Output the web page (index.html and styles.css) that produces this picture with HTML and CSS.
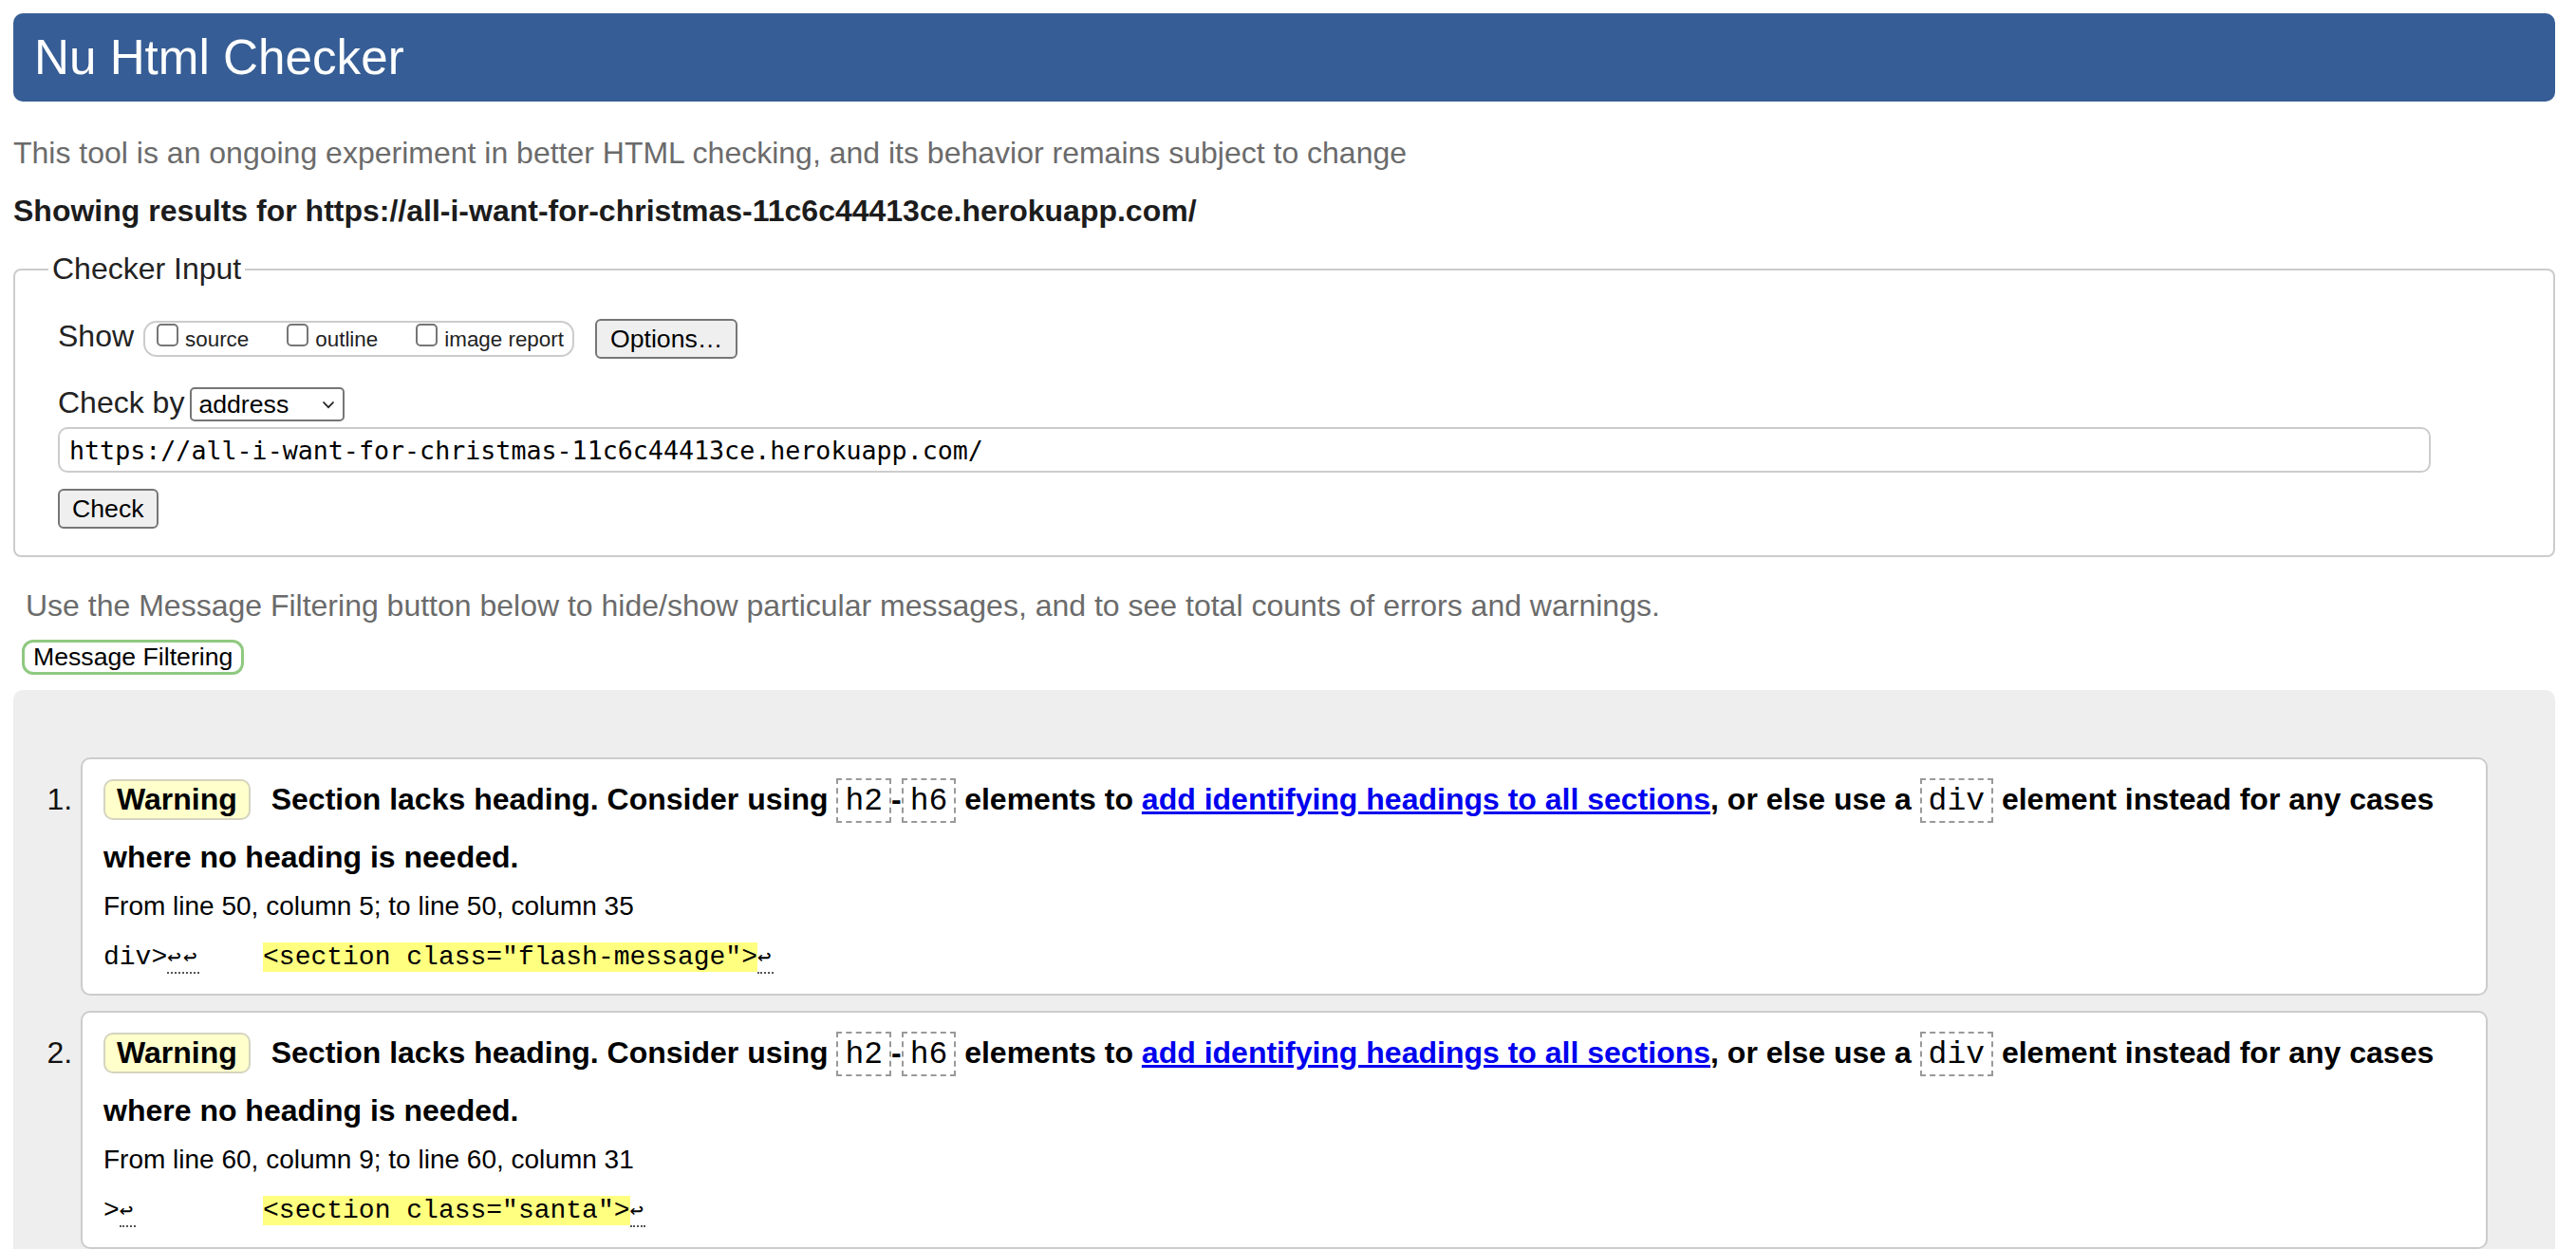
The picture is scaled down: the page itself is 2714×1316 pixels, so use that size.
FILE: index.html
```html
<!DOCTYPE html>
<html lang="en">
<head>
<meta charset="utf-8">
<title>Nu Html Checker</title>
<link rel="stylesheet" href="styles.css">
</head>
<body>
<h1 class="title">Nu Html Checker</h1>
<p class="intro">This tool is an ongoing experiment in better HTML checking, and its behavior remains subject to change</p>
<p class="showing">Showing results for https://all-i-want-for-christmas-11c6c44413ce.herokuapp.com/</p>
<form class="checker">
  <fieldset class="checker-input">
    <legend class="legend">Checker Input</legend>
    <div class="show-row">
      <span class="row-label">Show</span>
      <div class="show-group">
        <label class="opt"><input type="checkbox" class="cb"><span class="opt-text">source</span></label>
        <label class="opt"><input type="checkbox" class="cb"><span class="opt-text">outline</span></label>
        <label class="opt opt-last"><input type="checkbox" class="cb"><span class="opt-text">image report</span></label>
      </div>
      <button class="btn options" type="button">Options…</button>
    </div>
    <div class="by-row">
      <span class="row-label by-label">Check by</span>
      <div class="select">
        <span>address</span>
        <svg class="chev" width="14" height="9" viewBox="0 0 14 9"><polyline points="1.5,1.5 7,7.2 12.5,1.5" fill="none" stroke="#222" stroke-width="1.8"/></svg>
      </div>
    </div>
    <input class="url" type="text" value="https://all-i-want-for-christmas-11c6c44413ce.herokuapp.com/">
    <div class="check-row"><button class="btn check" type="button">Check</button></div>
  </fieldset>
</form>
<p class="filter-note">Use the Message Filtering button below to hide/show particular messages, and to see total counts of errors and warnings.</p>
<button class="filter-btn" type="button">Message Filtering</button>
<div class="results">
  <ol class="messages">
    <li class="msg">
      <p class="msg-text"><span class="badge">Warning</span> Section lacks heading. Consider using <code class="tag">h2</code>-<code class="tag">h6</code> elements to <a class="link" href="#">add identifying headings to all sections</a>, or else use a <code class="tag">div</code> element instead for any cases where no heading is needed.</p>
      <p class="loc">From line 50, column 5; to line 50, column 35</p>
      <p class="extract">div&gt;<span class="lf">↩↩</span>    <span class="hl">&lt;section class="flash-message"&gt;</span><span class="lf">↩</span></p>
    </li>
    <li class="msg">
      <p class="msg-text"><span class="badge">Warning</span> Section lacks heading. Consider using <code class="tag">h2</code>-<code class="tag">h6</code> elements to <a class="link" href="#">add identifying headings to all sections</a>, or else use a <code class="tag">div</code> element instead for any cases where no heading is needed.</p>
      <p class="loc">From line 60, column 9; to line 60, column 31</p>
      <p class="extract">&gt;<span class="lf">↩</span>        <span class="hl">&lt;section class="santa"&gt;</span><span class="lf">↩</span></p>
    </li>
  </ol>
</div>
</body>
</html>
```

FILE: styles.css
```css
* {
  box-sizing: border-box;
}

html {
  background: #ffffff;
}

body {
  margin: 0;
  padding: 14px 22px 0 14px;
  font-family: "Liberation Sans", Arial, Helvetica, sans-serif;
  font-size: 32px;
  color: #222222;
}

.title {
  margin: 0;
  height: 93px;
  line-height: 93px;
  padding: 0 22px;
  background: #365d95;
  color: #ffffff;
  font-weight: normal;
  font-size: 51.2px;
  border-radius: 10px;
}

.intro {
  margin: 36px 0 0;
  line-height: 37px;
  color: #6b6b6b;
}

.showing {
  margin: 24px 0 0;
  line-height: 37px;
  font-weight: bold;
  color: #1c1c1c;
}

.checker {
  margin: 0;
}

.checker-input {
  margin: 24px 0 0;
  padding: 0 20px 28px 45px;
  border: 2px solid #cccccc;
  border-radius: 8px;
  min-width: 0;
}

.legend {
  padding: 0 4px;
  margin-left: -10px;
  font-size: 32px;
  line-height: 37px;
  color: #222222;
}

.show-row {
  display: flex;
  align-items: flex-start;
  margin-top: 34px;
  height: 42px;
}

.row-label {
  line-height: 37px;
  color: #222222;
}

.show-group {
  display: flex;
  align-items: flex-start;
  height: 38px;
  margin: 2px 0 0 10px;
  padding: 1px 9px 0 12px;
  border: 2px solid #cccccc;
  border-radius: 14px;
}

.opt {
  display: flex;
  align-items: flex-start;
  margin-right: 40px;
}

.opt-last {
  margin-right: 0;
}

.cb {
  appearance: none;
  -webkit-appearance: none;
  flex-shrink: 0;
  width: 23px;
  height: 24px;
  margin: 0 7px 0 0;
  border: 2px solid #767676;
  border-radius: 5px;
  background: #ffffff;
}

.opt-text {
  margin-top: 4px;
  font-size: 22.4px;
  color: #222222;
}

.btn {
  height: 42px;
  font-family: "Liberation Sans", Arial, Helvetica, sans-serif;
  font-size: 26.67px;
  color: #000000;
  background: #efefef;
  border: 2px solid #767676;
  border-radius: 6px;
}

.options {
  margin-left: 22px;
  padding: 0 14px;
}

.by-row {
  display: flex;
  align-items: flex-start;
  margin-top: 30px;
}

.by-label {
  margin-top: -2px;
}

.select {
  display: flex;
  align-items: center;
  justify-content: space-between;
  width: 163px;
  height: 36px;
  margin-left: 6px;
  padding: 0 8px 0 7px;
  border: 2px solid #767676;
  border-radius: 5px;
  background: #ffffff;
  font-size: 26.67px;
  color: #000000;
}

.chev {
  display: block;
}

.url {
  display: block;
  width: 2500px;
  height: 48px;
  margin: 6px 0 0;
  padding: 0 10px;
  border: 2px solid #cccccc;
  border-radius: 10px;
  font-family: "DejaVu Sans Mono", Menlo, monospace;
  font-size: 26.67px;
  color: #000000;
  background: #ffffff;
  outline: none;
}

.check-row {
  margin-top: 17px;
}

.check {
  display: block;
  padding: 0 13px;
}

.filter-note {
  margin: 33px 0 0 13px;
  line-height: 37px;
  color: #6b6b6b;
}

.filter-btn {
  display: block;
  height: 37px;
  margin: 17px 0 0 9px;
  padding: 0 9px;
  border: 3px solid #8fc980;
  border-radius: 12px;
  background: #ffffff;
  font-family: "Liberation Sans", Arial, Helvetica, sans-serif;
  font-size: 26.67px;
  color: #000000;
}

.results {
  margin-top: 16px;
  background: #eeeeee;
  border-radius: 10px 10px 0 0;
}

.messages {
  margin: 0;
  padding: 71px 71px 40px 71px;
  list-style: decimal outside;
  color: #111111;
}

.msg {
  margin: 0 0 16px;
  padding: 13px 22px 18px;
  background: #ffffff;
  border: 2px solid #cccccc;
  border-radius: 10px;
}

.msg-text {
  margin: 0;
  font-weight: bold;
  line-height: 58px;
  color: #000000;
}

.badge {
  display: inline-block;
  line-height: 39px;
  padding: 0 12px;
  margin-right: 13px;
  background: #ffffcc;
  border: 2px solid #d4d4c0;
  border-radius: 10px;
}

.tag {
  font-family: "Liberation Mono", "Courier New", monospace;
  font-size: 33px;
  font-weight: normal;
  padding: 4px 7px 2px;
  border: 2px dashed #999999;
}

.link {
  color: #0000ee;
  text-decoration: underline;
}

.loc {
  margin: 7px 0 0;
  font-size: 28px;
  line-height: 32px;
  color: #000000;
}

.extract {
  margin: 17px 0 0;
  font-family: "Liberation Mono", "Courier New", monospace;
  font-size: 28px;
  line-height: 40px;
  white-space: pre;
  color: #000000;
}

.hl {
  background: #ffff80;
}

.lf {
  font-family: "DejaVu Sans Mono", monospace;
  font-size: 24px;
  letter-spacing: 2.35px;
  padding-bottom: 2px;
  border-bottom: 2px dotted #555555;
}
```
